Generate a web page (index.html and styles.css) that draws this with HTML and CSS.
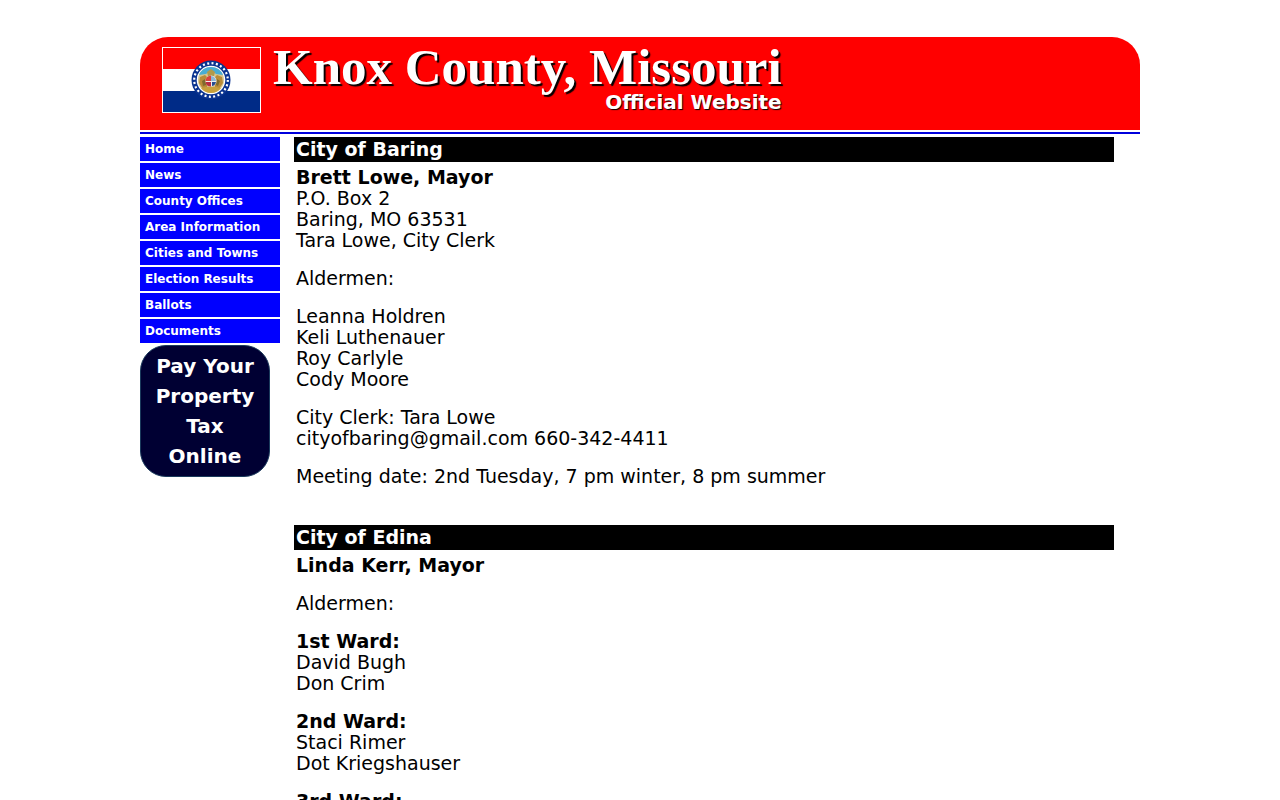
FILE: index.html
```html
<!DOCTYPE html>
<html lang="en">
<head>
    <meta charset="UTF-8">
    <meta name="viewport" content="width=device-width, initial-scale=1.0">
    <title>Knox County, Missouri</title>
    <link rel="stylesheet" href="styles.css">
</head>
<body>
    <div class="wrapper">
        <header class="banner">
            <!-- state flag -->
            <svg class="flag" viewBox="0 0 99 66" aria-hidden="true">
                <rect width="99" height="66" fill="#fff"/>
                <rect x="1" y="1" width="97" height="21" fill="#f00"/>
                <rect x="1" y="44" width="97" height="21" fill="#002b87"/>
                <circle cx="49" cy="33" r="19.5" fill="#0a3390"/>
                <circle cx="49" cy="33" r="16.8" fill="none" stroke="#fff" stroke-width="2.2" stroke-dasharray="2 2.4"/>
                <circle cx="49" cy="33" r="14.3" fill="#fff"/>
                <circle cx="49" cy="33" r="13" fill="#d6c690"/>
                <path d="M37 28a13 13 0 0 1 24 0l-7-1-5-4-5 4z" fill="#48add5"/>
                <path d="M38 30l5-2 3 3-1 9-4 2-4-6zM60 30l-5-2-3 3 1 9 4 2 4-6z" fill="#b98b38"/>
                <path d="M45 25l4-3 4 3-1 4h-6z" fill="#b19a4c"/>
                <path d="M40 34l3-2 1 6-3 1zM55 32l3 2-2 5-2-1z" fill="#7f6a2d"/>
                <path d="M39 41q10-3 20 0-4 5-10 5t-10-5z" fill="#c8a03d"/>
                <circle cx="49" cy="34" r="5.5" fill="#eee"/>
                <path d="M49 28.500v5.500h-5.500a5.500 5.500 0 0 1 5.500-5.500z" fill="#d8453d"/>
                <path d="M43.500 35h5.500v4.500a5.500 5.500 0 0 1-5.500-4.500z" fill="#b72e42"/>
                <path d="M49 29a5.500 5.500 0 0 1 5 5h-5z" fill="#8eb8d8"/>
                <path d="M50 35h4q-1 4-4 4z" fill="#264b91"/>
            </svg>
            <div class="titles">
                <h1>Knox County, Missouri</h1>
                <p>Official Website</p>
            </div>
        </header>
        <div class="columns">
            <div class="side">
                <nav>
                    <a href="#">Home</a>
                    <a href="#">News</a>
                    <a href="#">County Offices</a>
                    <a href="#">Area Information</a>
                    <a href="#">Cities and Towns</a>
                    <a href="#">Election Results</a>
                    <a href="#">Ballots</a>
                    <a href="#">Documents</a>
                </nav>
                <a class="pay" href="#">Pay Your Property Tax Online</a>
            </div>
            <main class="content">
                <section>
                    <h2>City of Baring</h2>
                    <p><b>Brett Lowe, Mayor</b><br>
                    P.O. Box 2<br>
                    Baring, MO 63531<br>
                    Tara Lowe, City Clerk</p>
                    <p>Aldermen:</p>
                    <p>Leanna Holdren<br>
                    Keli Luthenauer<br>
                    Roy Carlyle<br>
                    Cody Moore</p>
                    <p>City Clerk: Tara Lowe<br>
                    cityofbaring@gmail.com 660-342-4411</p>
                    <p>Meeting date: 2nd Tuesday, 7 pm winter, 8 pm summer</p>
                </section>
                <section>
                    <h2>City of Edina</h2>
                    <p><b>Linda Kerr, Mayor</b></p>
                    <p>Aldermen:</p>
                    <p><b>1st Ward:</b><br>
                    David Bugh<br>
                    Don Crim</p>
                    <p><b>2nd Ward:</b><br>
                    Staci Rimer<br>
                    Dot Kriegshauser</p>
                    <p><b>3rd Ward:</b></p>
                </section>
            </main>
        </div>
    </div>
</body>
</html>
```
FILE: styles.css
```css
*{
    padding: 0;
    margin: 0;
    box-sizing: border-box;
}
body{
    background: #fff;
    color: #000;
    font-family: "DejaVu Sans", Verdana, sans-serif;
}

.wrapper{
    max-width: 1000px;
    margin: 37px auto 0;
}

/* banner */
.banner{
    display: flex;
    align-items: flex-start;
    gap: 12px;
    min-height: 93px;
    padding: 10px 22px 0;
    background: #f00;
    border-radius: 28px 28px 0 0;
    color: #fff;
}
.flag{
    width: 99px;
    height: 66px;
    flex: none;
}
.titles{
    text-align: right;
}
.titles h1{
    font-family: "Liberation Serif", serif;
    font-size: 51px;
    line-height: 40px;
    text-shadow: 2px 2px 1px #000;
}
.titles p{
    font-size: 20px;
    font-weight: bold;
    line-height: 30px;
    text-shadow: 1px 1px 1px #000;
}

.columns{
    display: flex;
    gap: 14px;
    margin-top: 2px;
    padding-top: 3px;
    border-top: 2px solid #00d;
}

/* menu */
.side{
    width: 140px;
    flex: none;
}
.side a{
    color: #fff;
    font-weight: bold;
    text-decoration: none;
}
.side nav a{
    display: block;
    height: 24px;
    margin-bottom: 2px;
    padding-left: 5px;
    background: #00f;
    font-size: 12px;
    line-height: 24px;
}
.side .pay{
    display: block;
    width: 130px;
    padding: 5px 10px;
    background: #003;
    border: 1px solid #1a3a5c;
    border-radius: 26px;
    font-size: 20px;
    line-height: 30px;
    text-align: center;
}

/* cities */
.content{
    flex: 1;
    padding-right: 26px;
    font-size: 19px;
    line-height: 21px;
}
.content section{
    margin-bottom: 38px;
}
.content h2{
    margin-bottom: 5px;
    padding: 2px;
    background: #000;
    color: #fff;
    font-size: 19px;
    line-height: 21px;
}
.content p{
    margin-bottom: 17px;
    padding: 0 2px;
}
.content p:last-child{
    margin-bottom: 0;
}
```
